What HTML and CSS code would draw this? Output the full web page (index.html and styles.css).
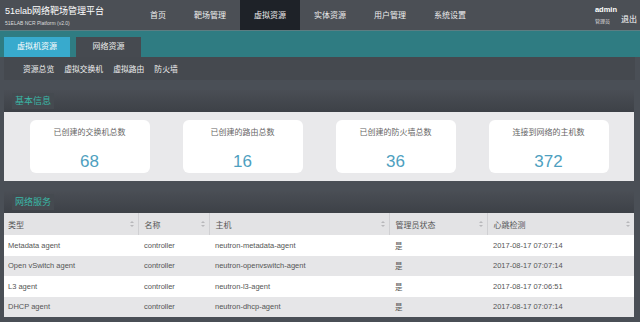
FILE: index.html
```html
<!DOCTYPE html>
<html lang="zh-CN">
<head>
    <meta charset="UTF-8">
    <title>51elab网络靶场管理平台</title>
    <link rel="stylesheet" href="styles.css">
</head>
<body>
    <div class="topbar">
        <div class="brand">
            <div class="brand-title">51elab网络靶场管理平台</div>
            <div class="brand-sub">51ELAB NCR Platform (v2.0)</div>
        </div>
        <div class="nav">
            <a>首页</a>
            <a>靶场管理</a>
            <a class="active">虚拟资源</a>
            <a>实体资源</a>
            <a>用户管理</a>
            <a>系统设置</a>
        </div>
        <div class="user">
            <div class="user-info">
                <div class="user-name">admin</div>
                <div class="user-role">管理员</div>
            </div>
            <a class="logout">退出</a>
        </div>
    </div>

    <div class="tabbar">
        <div class="tab active">虚拟机资源</div>
        <div class="tab">网络资源</div>
    </div>
    <div class="subnav">
        <a>资源总览</a>
        <a>虚拟交换机</a>
        <a>虚拟路由</a>
        <a>防火墙</a>
    </div>

    <div class="main">
        <div class="panel">
            <div class="panel-head"><span>基本信息</span></div>
            <div class="stats">
                <div class="card">
                    <div class="card-label">已创建的交换机总数</div>
                    <div class="card-num">68</div>
                </div>
                <div class="card">
                    <div class="card-label">已创建的路由总数</div>
                    <div class="card-num">16</div>
                </div>
                <div class="card">
                    <div class="card-label">已创建的防火墙总数</div>
                    <div class="card-num">36</div>
                </div>
                <div class="card">
                    <div class="card-label">连接到网络的主机数</div>
                    <div class="card-num">372</div>
                </div>
            </div>
        </div>

        <div class="panel">
            <div class="panel-head"><span>网络服务</span></div>
            <table class="table">
                <colgroup>
                    <col style="width:134px">
                    <col style="width:71px">
                    <col style="width:180px">
                    <col style="width:98px">
                    <col>
                </colgroup>
                <thead>
                    <tr>
                        <th><span>类型</span><i class="sort"></i></th>
                        <th><span>名称</span><i class="sort"></i></th>
                        <th><span>主机</span><i class="sort"></i></th>
                        <th><span>管理员状态</span><i class="sort"></i></th>
                        <th><span>心跳检测</span><i class="sort"></i></th>
                    </tr>
                </thead>
                <tbody>
                    <tr>
                        <td>Metadata agent</td>
                        <td>controller</td>
                        <td>neutron-metadata-agent</td>
                        <td>是</td>
                        <td>2017-08-17 07:07:14</td>
                    </tr>
                    <tr>
                        <td>Open vSwitch agent</td>
                        <td>controller</td>
                        <td>neutron-openvswitch-agent</td>
                        <td>是</td>
                        <td>2017-08-17 07:07:14</td>
                    </tr>
                    <tr>
                        <td>L3 agent</td>
                        <td>controller</td>
                        <td>neutron-l3-agent</td>
                        <td>是</td>
                        <td>2017-08-17 07:06:51</td>
                    </tr>
                    <tr>
                        <td>DHCP agent</td>
                        <td>controller</td>
                        <td>neutron-dhcp-agent</td>
                        <td>是</td>
                        <td>2017-08-17 07:07:14</td>
                    </tr>
                </tbody>
            </table>
        </div>
    </div>
</body>
</html>
```

FILE: styles.css
```css
body {
    margin: 0;
    width: 640px;
    height: 322px;
    overflow: hidden;
    background: #4a4f56;
    font-family: "Liberation Sans", "Noto Sans CJK SC", sans-serif;
    color: #fff;
}

/* top header */
.topbar {
    display: flex;
    height: 31px;
    background: #4b4f55;
    border-bottom: 1px solid #5d7d82;
    box-sizing: border-box;
}

.brand {
    width: 136px;
    padding: 5px 0 0 5px;
    box-sizing: border-box;
}

.brand-title {
    font-size: 9px;
    line-height: 12px;
}

.brand-sub {
    font-size: 5px;
    line-height: 8px;
    color: #ddd;
    margin-top: 2px;
}

.nav {
    display: flex;
}

.nav a {
    padding: 0 14px;
    font-size: 8px;
    line-height: 31px;
    color: #eee;
}

.nav a.active {
    background: #1e2228;
}

.user {
    margin-left: auto;
    display: flex;
    align-items: center;
    padding-right: 3px;
}

.user-info {
    margin-right: 4px;
}

.user-name {
    font-size: 7.5px;
    font-weight: bold;
    line-height: 10px;
}

.user-role {
    font-size: 5px;
    line-height: 8px;
    color: #ddd;
    margin-top: 2px;
}

.logout {
    font-size: 8px;
    margin-top: 6px;
}

/* teal tab strip */
.tabbar {
    display: flex;
    gap: 6px;
    height: 26px;
    padding: 6px 0 0 4px;
    box-sizing: border-box;
    background: #2f7c82;
}

.tab {
    width: 65px;
    height: 20px;
    line-height: 20px;
    text-align: center;
    font-size: 8px;
    background: #464a50;
    color: #eee;
}

.tab.active {
    width: 66px;
    background: #38aacd;
    color: #fff;
}

.subnav {
    display: flex;
    gap: 10px;
    height: 23px;
    margin: 0 5px 0 4px;
    padding-left: 19px;
    background: #45494f;
    align-items: center;
}

.subnav a {
    font-size: 7.8px;
    color: #eee;
}

/* content */
.main {
    padding: 10px 6px 0 4px;
    display: flex;
    flex-direction: column;
    gap: 10px;
}

.panel-head {
    height: 22px;
    padding-left: 8px;
    display: flex;
    align-items: center;
    background: linear-gradient(#4a4e55, #3d4147);
}

.panel-head span {
    font-size: 9px;
    line-height: 16px;
    padding: 0 3px;
    color: #3ab7a6;
    background: #454a50;
}

.stats {
    display: flex;
    justify-content: center;
    gap: 33px;
    padding: 8px 0;
    background: #e9e9eb;
}

.card {
    width: 120px;
    height: 53px;
    background: #fff;
    border-radius: 6px;
    text-align: center;
    padding-top: 8px;
    box-sizing: border-box;
}

.card-label {
    font-size: 8px;
    line-height: 10px;
    color: #666;
}

.card-num {
    font-size: 17px;
    line-height: 20px;
    margin-top: 14px;
    color: #4e9fc0;
}

/* table */
.table {
    width: 100%;
    border-collapse: collapse;
    table-layout: fixed;
    color: #555;
}

.table th {
    height: 22px;
    padding: 0 0 0 6px;
    background: #e3e3e5;
    font-size: 8px;
    font-weight: normal;
    text-align: left;
    border-left: 1px solid #d0d0d3;
    position: relative;
}

.table th:first-child {
    border-left: none;
    padding-left: 4px;
}

.sort {
    position: absolute;
    right: 4px;
    top: 8px;
    width: 0;
    height: 0;
    border-left: 2px solid transparent;
    border-right: 2px solid transparent;
    border-bottom: 2.5px solid #b8b8bb;
}

.sort::after {
    content: "";
    position: absolute;
    left: -2px;
    top: 4px;
    border-left: 2px solid transparent;
    border-right: 2px solid transparent;
    border-top: 2.5px solid #b8b8bb;
}

.table td {
    height: 20.5px;
    padding: 0 0 0 6px;
    font-size: 7.5px;
    color: #555;
    white-space: nowrap;
}

.table td:first-child {
    padding-left: 4px;
}

.table tbody tr {
    background: #fff;
}

.table tbody tr:nth-child(even) {
    background: #e6e6e8;
}
```
